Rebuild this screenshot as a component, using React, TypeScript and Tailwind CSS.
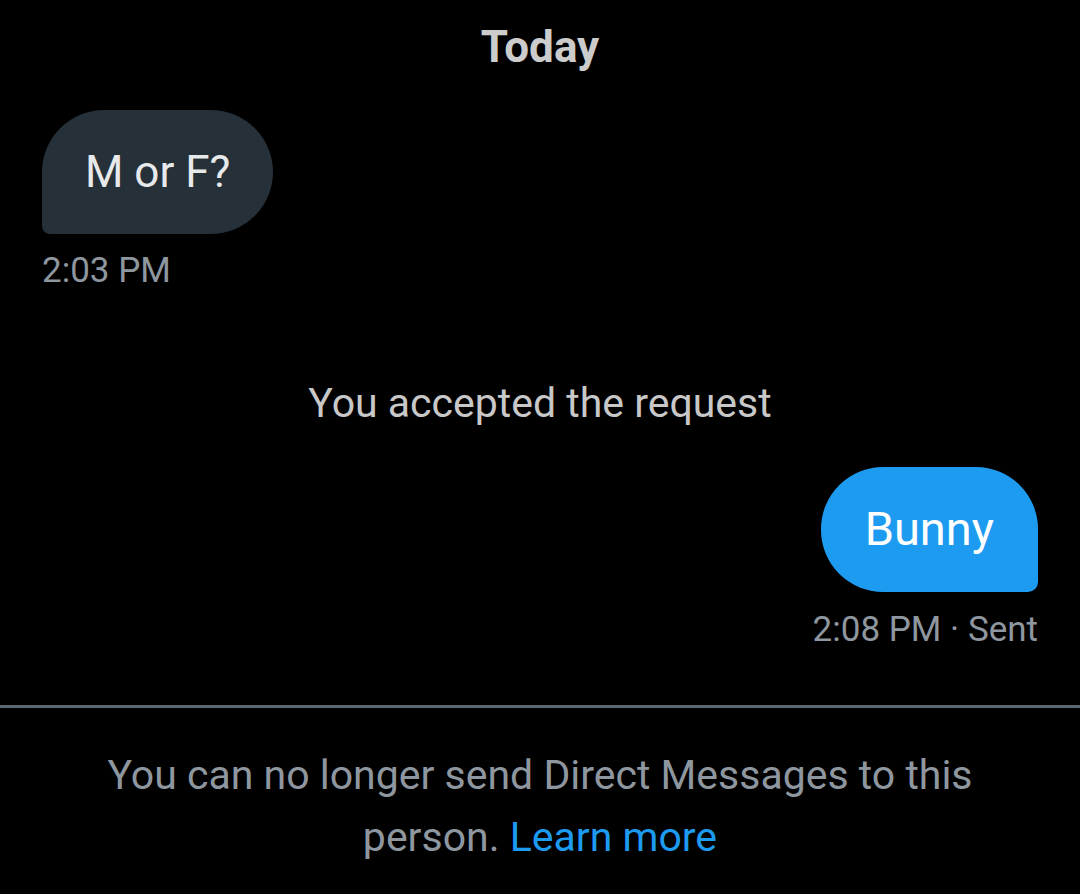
import React from "react";

const font = { fontFamily: "Roboto, 'Noto Sans', sans-serif" };

export default function App() {
    return (
        <div
            className="w-full h-[894px] bg-black flex flex-col overflow-hidden"
            style={font}
        >
            {/* Day header */}
            <div className="pt-[22px] text-center text-[44px] leading-[50px] font-bold text-[#cccccc]">
                Today
            </div>

            {/* Incoming message */}
            <div className="mt-[38px] px-[42px] flex flex-col items-start">
                <div className="h-[124px] flex items-center px-[43px] bg-[#253039] rounded-[62px] rounded-bl-[8px] text-[44px] text-[#e7e9ea]">
                    M or F?
                </div>
                <div className="mt-[17px] text-[35px] leading-[40px] text-[#8e979f]">
                    2:03 PM
                </div>
            </div>

            {/* System note */}
            <div className="mt-[88px] text-center text-[41px] leading-[48px] text-[#c8c8c8]">
                You accepted the request
            </div>

            {/* Outgoing message */}
            <div className="mt-[40px] px-[42px] flex flex-col items-end">
                <div className="h-[125px] flex items-center px-[44px] bg-[#1d9bf0] rounded-[62px] rounded-br-[10px] text-[47px] text-white">
                    Bunny
                </div>
                <div className="mt-[18px] text-[35px] leading-[40px] text-[#8e979f]">
                    2:08 PM · Sent
                </div>
            </div>

            <div className="mt-[55px] h-[3px] w-full bg-[#5b6670]" />

            {/* Footer notice */}
            <div className="pt-[36px] px-[90px] text-center text-[41px] leading-[62px] text-[#8e979f]">
                You can no longer send Direct Messages to this person.{" "}
                <span className="text-[#1d9bf0]">Learn more</span>
            </div>
        </div>
    );
}
